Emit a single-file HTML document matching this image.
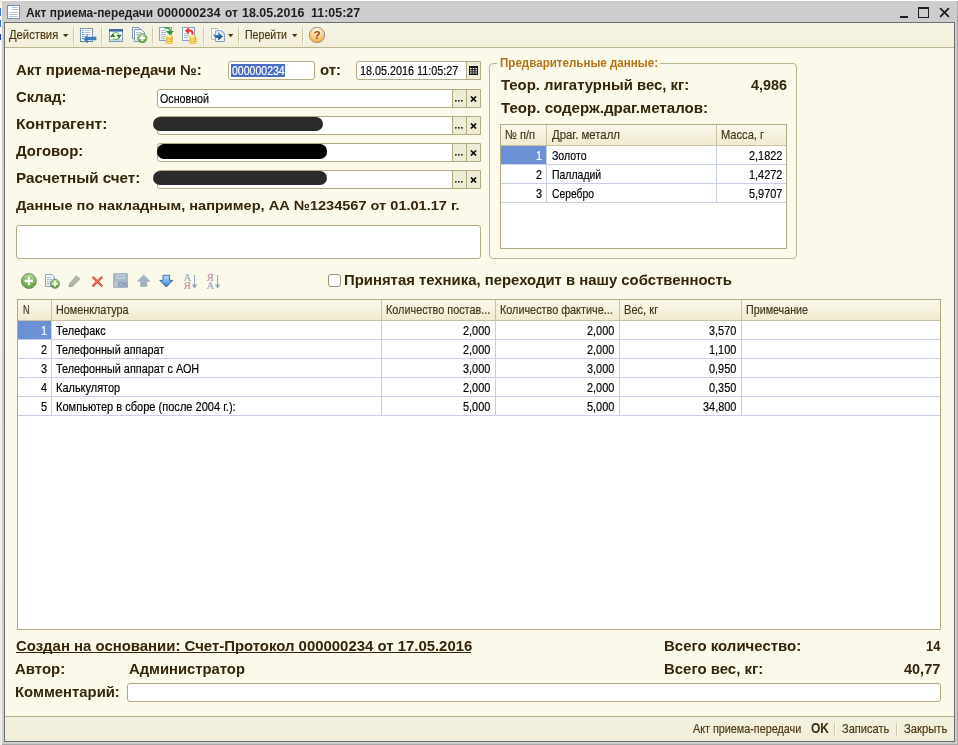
<!DOCTYPE html>
<html><head><meta charset="utf-8"><title>Акт приема-передачи</title>
<style>
html,body{margin:0;padding:0}
body{width:958px;height:745px;overflow:hidden;position:relative;background:#CDCDCD;font-family:"Liberation Sans",sans-serif;}
.a{position:absolute;box-sizing:border-box}
.t{position:absolute;white-space:nowrap;transform-origin:0 0;font-family:"Liberation Sans",sans-serif;}
.f{position:absolute;box-sizing:border-box;background:#fff;border:1px solid #B2AA82;border-radius:3px}
.btn{position:absolute;box-sizing:border-box;background:#EFECD6;border-left:1px solid #B2AA82}
.sep{position:absolute;width:2px;background:linear-gradient(90deg,#CFC8A6 50%,#FCFAF0 50%);-webkit-mask-image:linear-gradient(transparent 0,#000 25%,#000 75%,transparent 100%);mask-image:linear-gradient(transparent 0,#000 25%,#000 75%,transparent 100%)}
.hd{position:absolute;box-sizing:border-box;background:linear-gradient(#FAF8EC 0%,#F6F2DF 45%,#F0EACE 100%);border-right:1px solid #C9C1A0;border-bottom:1px solid #C9C1A0}
.gl{position:absolute;background:#C6D0E3}
</style></head><body>
<div class="a" style="left:0;top:0;width:958px;height:1px;background:#fff"></div><div class="a" style="left:0;top:0;width:1px;height:745px;background:linear-gradient(#F4EFD8 0,#F4EFD8 8px,#3F74D0 8px,#3F74D0 16px,#fff 16px,#fff 20px,#3F74D0 20px,#3F74D0 27px,#fff 27px,#fff 34px,#1F3FA8 34px,#1F3FA8 40px,#fff 40px,#E8E8E8 100%)"></div><div class="a" style="left:1px;top:0;width:1px;height:745px;background:#F2F2F2"></div><div class="a" style="left:957px;top:1px;width:1px;height:744px;background:#A8A8A8"></div><div class="a" style="left:2px;top:744px;width:956px;height:1px;background:#A8A8A8"></div><div class="a" style="left:4px;top:22px;width:951px;height:720px;background:#6F6F6F"></div><div class="a" style="left:5px;top:23px;width:949px;height:718px;background:#FBF9EA"></div><div class="a" style="left:5px;top:23px;width:949px;height:24px;background:linear-gradient(#F5F3E2,#F2F0DC)"></div><div class="a" style="left:5px;top:47px;width:949px;height:1px;background:#BDB58F"></div><div class="a" style="left:5px;top:716px;width:949px;height:1px;background:#B5AD86"></div><div class="a" style="left:5px;top:717px;width:949px;height:24px;background:linear-gradient(#F3F1DF,#F0EEDA)"></div><div class="t" style="left:25.50px;top:5px;font-size:13px;line-height:15px;color:#1E1E22;transform:scaleX(0.9157);font-weight:bold;">Акт приема-передачи</div>
<div class="t" style="left:157.20px;top:5px;font-size:13px;line-height:15px;color:#1E1E22;transform:scaleX(0.9760);font-weight:bold;">000000234</div>
<div class="t" style="left:225.00px;top:5px;font-size:13px;line-height:15px;color:#1E1E22;transform:scaleX(0.9143);font-weight:bold;">от</div>
<div class="t" style="left:242.20px;top:5px;font-size:13px;line-height:15px;color:#1E1E22;transform:scaleX(0.9575);font-weight:bold;">18.05.2016</div>
<div class="t" style="left:310.90px;top:5px;font-size:13px;line-height:15px;color:#1E1E22;transform:scaleX(0.9569);font-weight:bold;">11:05:27</div>
<div class="t" style="left:9.00px;top:27px;font-size:13px;line-height:15px;color:#4A3810;transform:scaleX(0.8641);-webkit-text-stroke:0.18px;">Действия</div>
<div class="t" style="left:245.40px;top:27px;font-size:13px;line-height:15px;color:#4A3810;transform:scaleX(0.8155);-webkit-text-stroke:0.18px;">Перейти</div>
<div class="sep" style="left:73px;top:24px;height:23px"></div><div class="sep" style="left:101px;top:24px;height:23px"></div><div class="sep" style="left:152px;top:24px;height:23px"></div><div class="sep" style="left:203px;top:24px;height:23px"></div><div class="sep" style="left:238px;top:24px;height:23px"></div><div class="sep" style="left:302px;top:24px;height:23px"></div><svg class="a" style="left:63px;top:34px" width="6" height="4" viewBox="0 0 6 4"><path d="M0 0H5.4L2.7 3.2Z" fill="#4A3A18"/></svg><svg class="a" style="left:228px;top:34px" width="6" height="4" viewBox="0 0 6 4"><path d="M0 0H5.4L2.7 3.2Z" fill="#4A3A18"/></svg><svg class="a" style="left:292px;top:34px" width="6" height="4" viewBox="0 0 6 4"><path d="M0 0H5.4L2.7 3.2Z" fill="#4A3A18"/></svg><div class="t" style="left:16.00px;top:62px;font-size:14px;line-height:16px;color:#33260A;transform:scaleX(1.0709);font-weight:bold;">Акт приема-передачи №:</div>
<div class="t" style="left:320.30px;top:62px;font-size:14px;line-height:16px;color:#33260A;transform:scaleX(1.0684);font-weight:bold;">от:</div>
<div class="t" style="left:16.00px;top:89px;font-size:14px;line-height:16px;color:#33260A;transform:scaleX(1.0589);font-weight:bold;">Склад:</div>
<div class="t" style="left:16.00px;top:116px;font-size:14px;line-height:16px;color:#33260A;transform:scaleX(1.1092);font-weight:bold;">Контрагент:</div>
<div class="t" style="left:16.00px;top:143px;font-size:14px;line-height:16px;color:#33260A;transform:scaleX(1.0672);font-weight:bold;">Договор:</div>
<div class="t" style="left:16.00px;top:170px;font-size:14px;line-height:16px;color:#33260A;transform:scaleX(1.0856);font-weight:bold;">Расчетный счет:</div>
<div class="t" style="left:16.00px;top:198px;font-size:13.6px;line-height:15px;color:#33260A;transform:scaleX(1.0704);font-weight:bold;">Данные по накладным, например, АА №1234567 от 01.01.17 г.</div>
<div class="t" style="left:344.00px;top:272px;font-size:14px;line-height:16px;color:#33260A;transform:scaleX(1.0626);font-weight:bold;">Принятая техника, переходит в нашу собственность</div>
<div class="t" style="left:16.00px;top:638px;font-size:14px;line-height:16px;color:#33260A;transform:scaleX(1.0657);font-weight:bold;">Создан на основании: Счет-Протокол 000000234 от 17.05.2016</div>
<div class="a" style="left:16px;top:652px;width:455px;height:1px;background:#33260A"></div><div class="t" style="left:15.00px;top:661px;font-size:14px;line-height:16px;color:#33260A;transform:scaleX(1.0681);font-weight:bold;">Автор:</div>
<div class="t" style="left:128.50px;top:661px;font-size:14px;line-height:16px;color:#33260A;transform:scaleX(1.0560);font-weight:bold;">Администратор</div>
<div class="t" style="left:15.00px;top:684px;font-size:14px;line-height:16px;color:#33260A;transform:scaleX(1.0593);font-weight:bold;">Комментарий:</div>
<div class="t" style="left:663.80px;top:638px;font-size:14px;line-height:16px;color:#33260A;transform:scaleX(1.0693);font-weight:bold;">Всего количество:</div>
<div class="t" style="left:926.00px;top:638px;font-size:14px;line-height:16px;color:#33260A;transform:scaleX(0.9189);font-weight:bold;">14</div>
<div class="t" style="left:663.80px;top:661px;font-size:14px;line-height:16px;color:#33260A;transform:scaleX(1.0681);font-weight:bold;">Всего вес, кг:</div>
<div class="t" style="left:904.00px;top:661px;font-size:14px;line-height:16px;color:#33260A;transform:scaleX(1.0353);font-weight:bold;">40,77</div>
<div class="f" style="left:228px;top:61px;width:87px;height:19px"></div><div class="a" style="left:231px;top:64px;width:54px;height:13px;background:#4A6DC2"></div><div class="t" style="left:231.80px;top:63px;font-size:13px;line-height:15px;color:#fff;transform:scaleX(0.8100);-webkit-text-stroke:0.18px;">000000234</div>
<div class="f" style="left:356px;top:61px;width:125px;height:19px;border-radius:3px 0 0 3px"></div><div class="btn" style="left:466px;top:62px;width:14px;height:17px"></div><div class="t" style="left:359.70px;top:63px;font-size:13px;line-height:15px;color:#000;transform:scaleX(0.8309);-webkit-text-stroke:0.18px;">18.05.2016 11:05:27</div>
<div class="f" style="left:157px;top:89px;width:324px;height:19px;border-radius:3px 0 0 3px"></div><div class="btn" style="left:452px;top:90px;width:14px;height:17px"></div><div class="btn" style="left:466px;top:90px;width:14px;height:17px"></div><svg class="a" style="left:455px;top:100px" width="9" height="2" viewBox="0 0 9 2"><rect x="0" y="0" width="1.6" height="1.6" fill="#222"/><rect x="3" y="0" width="1.6" height="1.6" fill="#222"/><rect x="6" y="0" width="1.6" height="1.6" fill="#222"/></svg><svg class="a" style="left:470px;top:96px" width="7" height="6" viewBox="0 0 7 6"><path d="M0.9 0.5L6.1 5.5M6.1 0.5L0.9 5.5" stroke="#111" stroke-width="1.7" fill="none"/></svg><div class="f" style="left:157px;top:116px;width:324px;height:19px;border-radius:3px 0 0 3px"></div><div class="btn" style="left:452px;top:117px;width:14px;height:17px"></div><div class="btn" style="left:466px;top:117px;width:14px;height:17px"></div><svg class="a" style="left:455px;top:127px" width="9" height="2" viewBox="0 0 9 2"><rect x="0" y="0" width="1.6" height="1.6" fill="#222"/><rect x="3" y="0" width="1.6" height="1.6" fill="#222"/><rect x="6" y="0" width="1.6" height="1.6" fill="#222"/></svg><svg class="a" style="left:470px;top:123px" width="7" height="6" viewBox="0 0 7 6"><path d="M0.9 0.5L6.1 5.5M6.1 0.5L0.9 5.5" stroke="#111" stroke-width="1.7" fill="none"/></svg><div class="f" style="left:157px;top:143px;width:324px;height:19px;border-radius:3px 0 0 3px"></div><div class="btn" style="left:452px;top:144px;width:14px;height:17px"></div><div class="btn" style="left:466px;top:144px;width:14px;height:17px"></div><svg class="a" style="left:455px;top:154px" width="9" height="2" viewBox="0 0 9 2"><rect x="0" y="0" width="1.6" height="1.6" fill="#222"/><rect x="3" y="0" width="1.6" height="1.6" fill="#222"/><rect x="6" y="0" width="1.6" height="1.6" fill="#222"/></svg><svg class="a" style="left:470px;top:150px" width="7" height="6" viewBox="0 0 7 6"><path d="M0.9 0.5L6.1 5.5M6.1 0.5L0.9 5.5" stroke="#111" stroke-width="1.7" fill="none"/></svg><div class="f" style="left:157px;top:170px;width:324px;height:19px;border-radius:3px 0 0 3px"></div><div class="btn" style="left:452px;top:171px;width:14px;height:17px"></div><div class="btn" style="left:466px;top:171px;width:14px;height:17px"></div><svg class="a" style="left:455px;top:181px" width="9" height="2" viewBox="0 0 9 2"><rect x="0" y="0" width="1.6" height="1.6" fill="#222"/><rect x="3" y="0" width="1.6" height="1.6" fill="#222"/><rect x="6" y="0" width="1.6" height="1.6" fill="#222"/></svg><svg class="a" style="left:470px;top:177px" width="7" height="6" viewBox="0 0 7 6"><path d="M0.9 0.5L6.1 5.5M6.1 0.5L0.9 5.5" stroke="#111" stroke-width="1.7" fill="none"/></svg><div class="t" style="left:160.00px;top:91px;font-size:13px;line-height:15px;color:#000;transform:scaleX(0.8218);-webkit-text-stroke:0.18px;">Основной</div>
<div class="a" style="left:153px;top:117px;width:170px;height:14px;background:#2A2A2A;border-radius:7px;filter:blur(0.6px)"></div><div class="a" style="left:157px;top:144px;width:170px;height:15px;background:#000;border-radius:7px;filter:blur(0.4px)"></div><div class="a" style="left:153px;top:171px;width:174px;height:14px;background:#2A2A2A;border-radius:7px;filter:blur(0.6px)"></div><div class="f" style="left:16px;top:225px;width:465px;height:34px"></div><div class="f" style="left:127px;top:683px;width:814px;height:19px"></div><div class="a" style="left:328px;top:274px;width:13px;height:13px;background:#fff;border:1px solid #9A9274;border-radius:3px"></div><div class="a" style="left:489px;top:63px;width:308px;height:196px;border:1px solid #BEB693;border-radius:4px"></div><div class="a" style="left:497px;top:58px;width:163px;height:12px;background:#FBF9EA"></div><div class="t" style="left:499.80px;top:55px;font-size:12.8px;line-height:15px;color:#B4721A;transform:scaleX(0.9056);font-weight:bold;">Предварительные данные:</div>
<div class="t" style="left:500.60px;top:77px;font-size:14px;line-height:16px;color:#33260A;transform:scaleX(1.0627);font-weight:bold;">Теор. лигатурный вес, кг:</div>
<div class="t" style="left:751.10px;top:77px;font-size:14px;line-height:16px;color:#33260A;transform:scaleX(1.0267);font-weight:bold;">4,986</div>
<div class="t" style="left:500.60px;top:100px;font-size:14px;line-height:16px;color:#33260A;transform:scaleX(1.0771);font-weight:bold;">Теор. содерж.драг.металов:</div>
<div class="a" style="left:500px;top:124px;width:287px;height:125px;background:#fff;border:1px solid #B2AA82"></div><div class="hd" style="left:501px;top:125px;width:46px;height:21px"></div><div class="hd" style="left:547px;top:125px;width:170px;height:21px"></div><div class="hd" style="left:717px;top:125px;width:69px;height:21px;border-right:none"></div><div class="gl" style="left:501px;top:164px;width:285px;height:1px"></div><div class="gl" style="left:501px;top:183px;width:285px;height:1px"></div><div class="gl" style="left:501px;top:202px;width:285px;height:1px"></div><div class="gl" style="left:546px;top:146px;width:1px;height:57px"></div><div class="gl" style="left:716px;top:146px;width:1px;height:57px"></div><div class="a" style="left:501px;top:146px;width:45px;height:18px;background:#6C90D4"></div><div class="t" style="left:505.20px;top:127px;font-size:13px;line-height:15px;color:#3E361C;transform:scaleX(0.8539);-webkit-text-stroke:0.18px;">№ п/п</div>
<div class="t" style="left:551.50px;top:127px;font-size:13px;line-height:15px;color:#3E361C;transform:scaleX(0.8754);-webkit-text-stroke:0.18px;">Драг. металл</div>
<div class="t" style="left:721.40px;top:127px;font-size:13px;line-height:15px;color:#3E361C;transform:scaleX(0.8536);-webkit-text-stroke:0.18px;">Масса, г</div>
<div class="t" style="left:535.71px;top:148px;font-size:13px;line-height:15px;color:#fff;transform:scaleX(0.8400);-webkit-text-stroke:0.18px;">1</div>
<div class="t" style="left:551.50px;top:148px;font-size:13px;line-height:15px;color:#000;transform:scaleX(0.8118);-webkit-text-stroke:0.18px;">Золото</div>
<div class="t" style="left:748.81px;top:148px;font-size:13px;line-height:15px;color:#000;transform:scaleX(0.8400);-webkit-text-stroke:0.18px;">2,1822</div>
<div class="t" style="left:535.71px;top:167px;font-size:13px;line-height:15px;color:#000;transform:scaleX(0.8400);-webkit-text-stroke:0.18px;">2</div>
<div class="t" style="left:551.50px;top:167px;font-size:13px;line-height:15px;color:#000;transform:scaleX(0.8057);-webkit-text-stroke:0.18px;">Палладий</div>
<div class="t" style="left:748.81px;top:167px;font-size:13px;line-height:15px;color:#000;transform:scaleX(0.8400);-webkit-text-stroke:0.18px;">1,4272</div>
<div class="t" style="left:535.71px;top:186px;font-size:13px;line-height:15px;color:#000;transform:scaleX(0.8400);-webkit-text-stroke:0.18px;">3</div>
<div class="t" style="left:551.50px;top:186px;font-size:13px;line-height:15px;color:#000;transform:scaleX(0.7953);-webkit-text-stroke:0.18px;">Серебро</div>
<div class="t" style="left:748.81px;top:186px;font-size:13px;line-height:15px;color:#000;transform:scaleX(0.8400);-webkit-text-stroke:0.18px;">5,9707</div>
<svg width="0" height="0" style="position:absolute"><defs>
<linearGradient id="gGreen" x1="0" y1="0" x2="0" y2="1"><stop offset="0" stop-color="#B9DE9E"/><stop offset="0.5" stop-color="#7DB95A"/><stop offset="1" stop-color="#62A342"/></linearGradient>
<linearGradient id="gGold" x1="0" y1="0" x2="1" y2="0"><stop offset="0" stop-color="#F7CF4A"/><stop offset="0.4" stop-color="#FFF6B8"/><stop offset="1" stop-color="#F3C23A"/></linearGradient>
<linearGradient id="gDoc" x1="0" y1="0" x2="1" y2="1"><stop offset="0" stop-color="#FFFFFF"/><stop offset="1" stop-color="#DCE6F2"/></linearGradient>
<linearGradient id="gBlueArr" x1="0" y1="0" x2="0" y2="1"><stop offset="0" stop-color="#BDDEF8"/><stop offset="0.45" stop-color="#7DB6E8"/><stop offset="1" stop-color="#3877C2"/></linearGradient>
<linearGradient id="gArr6" x1="0" y1="0" x2="0.3" y2="1"><stop offset="0" stop-color="#62AAE0"/><stop offset="0.5" stop-color="#3579B4"/><stop offset="1" stop-color="#1B3F62"/></linearGradient>
<linearGradient id="gBlueArr2" x1="0" y1="0" x2="1" y2="0"><stop offset="0" stop-color="#24507F"/><stop offset="1" stop-color="#4C8FCC"/></linearGradient>
<radialGradient id="gHelp" cx="0.5" cy="0.22" r="0.85"><stop offset="0" stop-color="#FFF8EA"/><stop offset="0.4" stop-color="#FBDDA8"/><stop offset="0.75" stop-color="#F6B954"/><stop offset="1" stop-color="#F3A632"/></radialGradient>
<linearGradient id="gRed" x1="0" y1="0" x2="0" y2="1"><stop offset="0" stop-color="#E8695A"/><stop offset="1" stop-color="#C93A30"/></linearGradient>
</defs></svg>
<svg class="a" style="left:80px;top:28px;" width="17" height="16" viewBox="0 0 17 16">
<rect x="0.5" y="0.5" width="12" height="13" fill="#fff" stroke="#7C97B9"/>
<rect x="0" y="13" width="13" height="1" fill="#5E7FA9"/>
<g fill="#4B8AD0"><rect x="2" y="2" width="1.5" height="1"/><rect x="2" y="4" width="1.5" height="1"/><rect x="2" y="6" width="1.5" height="1"/><rect x="2" y="8" width="1.5" height="1"/><rect x="2" y="10" width="1.5" height="1"/></g>
<g fill="#B4C6DE"><rect x="4.5" y="2" width="6" height="1"/><rect x="4.5" y="4" width="6" height="1"/><rect x="4.5" y="6" width="6" height="1"/><rect x="4.5" y="8" width="2.5" height="1"/></g>
<path d="M3.6 11 L7.4 7 V8.9 H16.1 V12 H7.4 V15 Z" fill="#3B7DB9" stroke="#2F6CA6" stroke-width="0.4"/>
</svg>
<svg class="a" style="left:109px;top:29px;" width="14" height="13" viewBox="0 0 14 13">
<rect x="0.5" y="0.5" width="13" height="12" fill="#FBFDFF" stroke="#7C97B9"/>
<rect x="0.5" y="0.5" width="13" height="1.6" fill="#3C6A9E" stroke="#3C6A9E"/>
<rect x="1" y="9.6" width="12" height="2.4" fill="#CBDCF0"/>
<path d="M3.6 7 A3.5 3.3 0 0 1 10 5" fill="none" stroke="#73B860" stroke-width="1.1"/>
<path d="M10.2 7.2 A3.5 3.3 0 0 1 4 9.4" fill="none" stroke="#73B860" stroke-width="1.1"/>
<path d="M0.9 8 L3.7 4.4 L6.5 8 Z" fill="#2A7C1E"/>
<path d="M7.4 5.8 L12.8 5.8 L10.1 9.6 Z" fill="#2A7C1E"/>
</svg>
<svg class="a" style="left:132px;top:27px;" width="16" height="17" viewBox="0 0 16 17">
<path d="M0.5 0.5 H7 L9.5 3 V11.5 H0.5 Z" fill="#F4F7FB" stroke="#7D95B4"/>
<path d="M2.5 2.5 H9.5 L12.5 5.5 V14.5 H2.5 Z" fill="url(#gDoc)" stroke="#7D95B4"/>
<g fill="#A9BCD3"><rect x="4" y="5" width="5" height="1"/><rect x="4" y="7" width="3" height="1"/></g>
<circle cx="10.3" cy="11.2" r="4.6" fill="url(#gGreen)" stroke="#6E8F62" stroke-width="0.8"/>
<path d="M10.3 8.4 V14 M7.5 11.2 H13.1" stroke="#fff" stroke-width="1.8" fill="none"/>
</svg>
<svg class="a" style="left:159px;top:27px;" width="16" height="17" viewBox="0 0 16 17">
<rect x="0.5" y="0.5" width="12" height="13" fill="url(#gDoc)" stroke="#8BA4C6"/>
<g fill="#A9BCD3"><rect x="2" y="3" width="5" height="1"/><rect x="2" y="5" width="5" height="1"/><rect x="2" y="7" width="5" height="1"/><rect x="2" y="9" width="4" height="1"/><rect x="2" y="11" width="4" height="1"/></g>
<path d="M5.6 1 C9 0.2 11 1.4 11.1 4.2" fill="none" stroke="#46A83C" stroke-width="1.9"/>
<path d="M6.9 3.9 H14.9 L10.9 8.2 Z" fill="#2F962C"/>
<ellipse cx="10.4" cy="15.5" rx="3.6" ry="1.3" fill="#DDA81E"/><ellipse cx="10.4" cy="14.75" rx="3.6" ry="1.3" fill="url(#gGold)"/><ellipse cx="10.4" cy="13.75" rx="3.6" ry="1.3" fill="#DDA81E"/><ellipse cx="10.4" cy="13.0" rx="3.6" ry="1.3" fill="url(#gGold)"/><ellipse cx="10.4" cy="12.0" rx="3.6" ry="1.3" fill="#DDA81E"/><ellipse cx="10.4" cy="11.25" rx="3.6" ry="1.3" fill="url(#gGold)"/><ellipse cx="10.4" cy="10.25" rx="3.6" ry="1.3" fill="#DDA81E"/><ellipse cx="10.4" cy="9.5" rx="3.6" ry="1.3" fill="url(#gGold)"/></svg>
<svg class="a" style="left:182px;top:27px;" width="16" height="17" viewBox="0 0 16 17">
<rect x="0.5" y="0.5" width="12" height="13" fill="url(#gDoc)" stroke="#8BA4C6"/>
<g fill="#A9BCD3"><rect x="2" y="6" width="4" height="1"/><rect x="2" y="8" width="5" height="1"/><rect x="2" y="10" width="4" height="1"/></g>
<path d="M6.5 3.6 C10 3 10.8 5 10.5 7.6" fill="none" stroke="#E2352B" stroke-width="2"/>
<path d="M2.8 3.8 L7 0.4 V7.2 Z" fill="#E2352B"/>
<ellipse cx="10.9" cy="15.5" rx="3.6" ry="1.3" fill="#DDA81E"/><ellipse cx="10.9" cy="14.75" rx="3.6" ry="1.3" fill="url(#gGold)"/><ellipse cx="10.9" cy="13.75" rx="3.6" ry="1.3" fill="#DDA81E"/><ellipse cx="10.9" cy="13.0" rx="3.6" ry="1.3" fill="url(#gGold)"/><ellipse cx="10.9" cy="12.0" rx="3.6" ry="1.3" fill="#DDA81E"/><ellipse cx="10.9" cy="11.25" rx="3.6" ry="1.3" fill="url(#gGold)"/><ellipse cx="10.9" cy="10.25" rx="3.6" ry="1.3" fill="#DDA81E"/><ellipse cx="10.9" cy="9.5" rx="3.6" ry="1.3" fill="url(#gGold)"/></svg>
<svg class="a" style="left:211px;top:28px;" width="15" height="15" viewBox="0 0 15 15">
<path d="M0.5 0.5 H6.3 L8 2.2 V11.5 H0.5 Z" fill="#FDFDFE" stroke="#BDB9AD"/>
<path d="M4.6 2.8 H10.8 L13.4 5.4 V13.5 H4.6 Z" fill="#F4F9FE" stroke="#7E9BBD"/>
<path d="M10.6 3 V5.6 H13.2" fill="none" stroke="#A9C0DA" stroke-width="0.8"/>
<path d="M2 4.4 C2.6 6.6 4.6 7.6 7.2 6.8 V4 L12 8.5 L7.2 12.6 V9.8 C4.6 10.6 2.3 8.6 2 4.4 Z" fill="url(#gArr6)"/>
</svg>
<svg class="a" style="left:308px;top:26px;" width="18" height="18" viewBox="0 0 18 18">
<circle cx="9" cy="9" r="7.7" fill="url(#gHelp)" stroke="#8E8C94" stroke-width="0.9"/>
<text x="9" y="13" text-anchor="middle" font-family="Liberation Sans" font-weight="bold" font-size="11.5" fill="#8A4B18">?</text>
</svg>
<svg class="a" style="left:20px;top:272px;" width="18" height="18" viewBox="0 0 18 18">
<circle cx="8.9" cy="9" r="7.4" fill="url(#gGreen)" stroke="#6A8A5C" stroke-width="1"/>
<path d="M8.9 4.8 V13.2 M4.7 9 H13.1" stroke="#fff" stroke-width="2.3" fill="none"/>
</svg>
<svg class="a" style="left:44px;top:273px;" width="16" height="16" viewBox="0 0 16 16">
<path d="M1.5 1.5 H8 L10.5 4 V13.5 H1.5 Z" fill="url(#gDoc)" stroke="#8BA4C6"/>
<g fill="#A9BCD3"><rect x="3" y="4" width="4" height="1"/><rect x="3" y="6" width="5" height="1"/><rect x="3" y="8" width="3" height="1"/><rect x="3" y="10" width="3" height="1"/></g>
<circle cx="11" cy="10.8" r="4.5" fill="url(#gGreen)" stroke="#5E7F52" stroke-width="0.8"/>
<path d="M11 8 V13.6 M8.2 10.8 H13.8" stroke="#fff" stroke-width="1.8" fill="none"/>
</svg>
<svg class="a" style="left:68px;top:274px;" width="14" height="14" viewBox="0 0 14 14">
<path d="M1 13 L1.6 9.2 L8.4 1.6 L12.2 5 L5 12.2 Z" fill="#AEB9A6" stroke="#9FAB98" stroke-width="0.6"/>
<path d="M1 13 L1.5 10.5 L3.4 12.4 Z" fill="#8E9A88"/>
</svg>
<svg class="a" style="left:91px;top:275px;" width="13" height="13" viewBox="0 0 13 13">
<path d="M2.3 2.5 L10.5 10.7 M10.5 2.5 L2.3 10.7" stroke="#D9483C" stroke-width="2.4" stroke-linecap="round" fill="none"/>
<path d="M2.6 2.8 L10.2 10.4 M10.2 2.8 L2.6 10.4" stroke="#EF8E82" stroke-width="0.8" stroke-linecap="round" fill="none"/>
</svg>
<svg class="a" style="left:113px;top:273px;" width="15" height="15" viewBox="0 0 15 15">
<rect x="0" y="0" width="15" height="15" rx="1" fill="#A9B9CC"/>
<rect x="3" y="1.5" width="9" height="4.5" fill="#C3CDD6"/>
<rect x="4" y="3" width="7" height="1.2" fill="#A9B9CC"/>
<rect x="1.5" y="8.5" width="3" height="5.5" fill="#B9C6D6"/>
<text x="5" y="14.4" font-family="Liberation Sans" font-weight="bold" font-size="7" fill="#8497B1">OK</text>
</svg>
<svg class="a" style="left:137px;top:274px;" width="14" height="14" viewBox="0 0 14 14">
<path d="M6.7 1 L13 7.2 H9.8 V12.5 H3.6 V7.2 H0.4 Z" fill="#A3B2C2" stroke="#97A8BA" stroke-width="0.6"/>
</svg>
<svg class="a" style="left:159px;top:274px;" width="15" height="14" viewBox="0 0 15 14">
<path d="M4 1.3 H10.6 V6.4 H13.8 L7.3 13 L0.8 6.4 H4 Z" fill="url(#gBlueArr)" stroke="#2F62A8" stroke-width="0.9"/>
</svg>
<svg class="a" style="left:183px;top:272px;" width="16" height="18" viewBox="0 0 16 18">
<text x="4.3" y="8.6" text-anchor="middle" font-family="Liberation Serif" font-size="10.5" fill="#8AA0BA">A</text>
<text x="4.3" y="17" text-anchor="middle" font-family="Liberation Serif" font-size="10.5" fill="#AE8A92">Я</text>
<path d="M11.6 3 V14" stroke="#8BA5C2" stroke-width="1" fill="none"/>
<path d="M8.8 12.6 H14.4 L11.6 16.4 Z" fill="#8BA5C2"/>
</svg>
<svg class="a" style="left:206px;top:272px;" width="16" height="18" viewBox="0 0 16 18">
<text x="4.3" y="8.6" text-anchor="middle" font-family="Liberation Serif" font-size="10.5" fill="#AE8A92">Я</text>
<text x="4.3" y="17" text-anchor="middle" font-family="Liberation Serif" font-size="10.5" fill="#8AA0BA">A</text>
<path d="M11.6 3 V14" stroke="#8BA5C2" stroke-width="1" fill="none"/>
<path d="M8.8 12.6 H14.4 L11.6 16.4 Z" fill="#8BA5C2"/>
</svg>
<svg class="a" style="left:469px;top:66px;" width="9" height="9" viewBox="0 0 9 9">
<rect x="0" y="0" width="9" height="9" fill="#111"/>
<g fill="#fff"><rect x="1" y="2" width="1.6" height="1.2"/><rect x="3.7" y="2" width="1.6" height="1.2"/><rect x="6.4" y="2" width="1.6" height="1.2"/>
<rect x="1" y="4.2" width="1.6" height="1.2"/><rect x="3.7" y="4.2" width="1.6" height="1.2"/><rect x="6.4" y="4.2" width="1.6" height="1.2"/>
<rect x="1" y="6.4" width="1.6" height="1.2"/><rect x="3.7" y="6.4" width="1.6" height="1.2"/><rect x="6.4" y="6.4" width="1.6" height="1.2"/></g>
</svg>
<svg class="a" style="left:7px;top:5px;" width="13" height="14" viewBox="0 0 13 14">
<rect x="0.5" y="0.5" width="12" height="13" fill="#fff" stroke="#6F90BA"/>
<g fill="#B3C5DD"><rect x="5" y="2" width="6" height="1"/><rect x="5" y="4" width="6" height="1"/><rect x="2" y="7" width="9" height="1"/><rect x="2" y="9" width="9" height="1"/><rect x="2" y="11" width="9" height="1"/></g>
</svg>
<svg class="a" style="left:900px;top:16px;" width="8" height="2" viewBox="0 0 8 2"><rect width="8" height="2" fill="#1E1E1E"/></svg>
<svg class="a" style="left:918px;top:7px;" width="11" height="11" viewBox="0 0 11 11"><rect x="0.5" y="1" width="10" height="9.5" fill="none" stroke="#1E1E1E"/><rect x="0" y="0" width="11" height="2" fill="#1E1E1E"/></svg>
<svg class="a" style="left:939px;top:7px;" width="11" height="11" viewBox="0 0 11 11"><path d="M1.6 1.6 L9.4 9.4 M9.4 1.6 L1.6 9.4" stroke="#1E1E1E" stroke-width="1.8" stroke-linecap="round" fill="none"/></svg>
<div class="a" style="left:17px;top:299px;width:924px;height:331px;background:#fff;border:1px solid #B2AA82"></div><div class="hd" style="left:18px;top:300px;width:34px;height:21px"></div><div class="hd" style="left:52px;top:300px;width:330px;height:21px"></div><div class="hd" style="left:382px;top:300px;width:114px;height:21px"></div><div class="hd" style="left:496px;top:300px;width:124px;height:21px"></div><div class="hd" style="left:620px;top:300px;width:122px;height:21px"></div><div class="hd" style="left:742px;top:300px;width:198px;height:21px;border-right:none"></div><div class="gl" style="left:18px;top:339px;width:922px;height:1px"></div><div class="gl" style="left:18px;top:358px;width:922px;height:1px"></div><div class="gl" style="left:18px;top:377px;width:922px;height:1px"></div><div class="gl" style="left:18px;top:396px;width:922px;height:1px"></div><div class="gl" style="left:18px;top:415px;width:922px;height:1px"></div><div class="gl" style="left:51px;top:321px;width:1px;height:95px"></div><div class="gl" style="left:381px;top:321px;width:1px;height:95px"></div><div class="gl" style="left:495px;top:321px;width:1px;height:95px"></div><div class="gl" style="left:619px;top:321px;width:1px;height:95px"></div><div class="gl" style="left:741px;top:321px;width:1px;height:95px"></div><div class="a" style="left:18px;top:321px;width:33px;height:18px;background:#6C90D4"></div><div class="t" style="left:22.50px;top:302px;font-size:13px;line-height:15px;color:#3E361C;transform:scaleX(0.6933);-webkit-text-stroke:0.18px;">N</div>
<div class="t" style="left:56.30px;top:302px;font-size:13px;line-height:15px;color:#3E361C;transform:scaleX(0.8309);-webkit-text-stroke:0.18px;">Номенклатура</div>
<div class="t" style="left:386.30px;top:302px;font-size:13px;line-height:15px;color:#3E361C;transform:scaleX(0.8344);-webkit-text-stroke:0.18px;">Количество постав...</div>
<div class="t" style="left:500.00px;top:302px;font-size:13px;line-height:15px;color:#3E361C;transform:scaleX(0.8333);-webkit-text-stroke:0.18px;">Количество фактиче...</div>
<div class="t" style="left:624.30px;top:302px;font-size:13px;line-height:15px;color:#3E361C;transform:scaleX(0.8537);-webkit-text-stroke:0.18px;">Вес, кг</div>
<div class="t" style="left:746.30px;top:302px;font-size:13px;line-height:15px;color:#3E361C;transform:scaleX(0.8239);-webkit-text-stroke:0.18px;">Примечание</div>
<div class="t" style="left:40.91px;top:323px;font-size:13px;line-height:15px;color:#fff;transform:scaleX(0.8400);-webkit-text-stroke:0.18px;">1</div>
<div class="t" style="left:56.30px;top:323px;font-size:13px;line-height:15px;color:#000;transform:scaleX(0.8415);-webkit-text-stroke:0.18px;">Телефакс</div>
<div class="t" style="left:463.25px;top:323px;font-size:13px;line-height:15px;color:#000;transform:scaleX(0.8400);-webkit-text-stroke:0.18px;">2,000</div>
<div class="t" style="left:586.95px;top:323px;font-size:13px;line-height:15px;color:#000;transform:scaleX(0.8400);-webkit-text-stroke:0.18px;">2,000</div>
<div class="t" style="left:708.95px;top:323px;font-size:13px;line-height:15px;color:#000;transform:scaleX(0.8400);-webkit-text-stroke:0.18px;">3,570</div>
<div class="t" style="left:40.91px;top:342px;font-size:13px;line-height:15px;color:#000;transform:scaleX(0.8400);-webkit-text-stroke:0.18px;">2</div>
<div class="t" style="left:56.30px;top:342px;font-size:13px;line-height:15px;color:#000;transform:scaleX(0.8323);-webkit-text-stroke:0.18px;">Телефонный аппарат</div>
<div class="t" style="left:463.25px;top:342px;font-size:13px;line-height:15px;color:#000;transform:scaleX(0.8400);-webkit-text-stroke:0.18px;">2,000</div>
<div class="t" style="left:586.95px;top:342px;font-size:13px;line-height:15px;color:#000;transform:scaleX(0.8400);-webkit-text-stroke:0.18px;">2,000</div>
<div class="t" style="left:708.95px;top:342px;font-size:13px;line-height:15px;color:#000;transform:scaleX(0.8400);-webkit-text-stroke:0.18px;">1,100</div>
<div class="t" style="left:40.91px;top:361px;font-size:13px;line-height:15px;color:#000;transform:scaleX(0.8400);-webkit-text-stroke:0.18px;">3</div>
<div class="t" style="left:56.30px;top:361px;font-size:13px;line-height:15px;color:#000;transform:scaleX(0.8344);-webkit-text-stroke:0.18px;">Телефонный аппарат с АОН</div>
<div class="t" style="left:463.25px;top:361px;font-size:13px;line-height:15px;color:#000;transform:scaleX(0.8400);-webkit-text-stroke:0.18px;">3,000</div>
<div class="t" style="left:586.95px;top:361px;font-size:13px;line-height:15px;color:#000;transform:scaleX(0.8400);-webkit-text-stroke:0.18px;">3,000</div>
<div class="t" style="left:708.95px;top:361px;font-size:13px;line-height:15px;color:#000;transform:scaleX(0.8400);-webkit-text-stroke:0.18px;">0,950</div>
<div class="t" style="left:40.91px;top:380px;font-size:13px;line-height:15px;color:#000;transform:scaleX(0.8400);-webkit-text-stroke:0.18px;">4</div>
<div class="t" style="left:56.30px;top:380px;font-size:13px;line-height:15px;color:#000;transform:scaleX(0.8433);-webkit-text-stroke:0.18px;">Калькулятор</div>
<div class="t" style="left:463.25px;top:380px;font-size:13px;line-height:15px;color:#000;transform:scaleX(0.8400);-webkit-text-stroke:0.18px;">2,000</div>
<div class="t" style="left:586.95px;top:380px;font-size:13px;line-height:15px;color:#000;transform:scaleX(0.8400);-webkit-text-stroke:0.18px;">2,000</div>
<div class="t" style="left:708.95px;top:380px;font-size:13px;line-height:15px;color:#000;transform:scaleX(0.8400);-webkit-text-stroke:0.18px;">0,350</div>
<div class="t" style="left:40.91px;top:399px;font-size:13px;line-height:15px;color:#000;transform:scaleX(0.8400);-webkit-text-stroke:0.18px;">5</div>
<div class="t" style="left:56.30px;top:399px;font-size:13px;line-height:15px;color:#000;transform:scaleX(0.8499);-webkit-text-stroke:0.18px;">Компьютер в сборе (после 2004 г.):</div>
<div class="t" style="left:463.25px;top:399px;font-size:13px;line-height:15px;color:#000;transform:scaleX(0.8400);-webkit-text-stroke:0.18px;">5,000</div>
<div class="t" style="left:586.95px;top:399px;font-size:13px;line-height:15px;color:#000;transform:scaleX(0.8400);-webkit-text-stroke:0.18px;">5,000</div>
<div class="t" style="left:702.91px;top:399px;font-size:13px;line-height:15px;color:#000;transform:scaleX(0.8400);-webkit-text-stroke:0.18px;">34,800</div>
<div class="t" style="left:692.80px;top:721px;font-size:13px;line-height:15px;color:#4A3810;transform:scaleX(0.8299);-webkit-text-stroke:0.18px;">Акт приема-передачи</div>
<div class="t" style="left:811.20px;top:720px;font-size:14px;line-height:16px;color:#3A2E10;transform:scaleX(0.8571);font-weight:bold;">OK</div>
<div class="t" style="left:842.30px;top:721px;font-size:13px;line-height:15px;color:#4A3810;transform:scaleX(0.8495);-webkit-text-stroke:0.18px;">Записать</div>
<div class="t" style="left:904.00px;top:721px;font-size:13px;line-height:15px;color:#4A3810;transform:scaleX(0.8649);-webkit-text-stroke:0.18px;">Закрыть</div>
<div class="sep" style="left:834px;top:721px;height:17px"></div><div class="sep" style="left:896px;top:721px;height:17px"></div></body></html>
